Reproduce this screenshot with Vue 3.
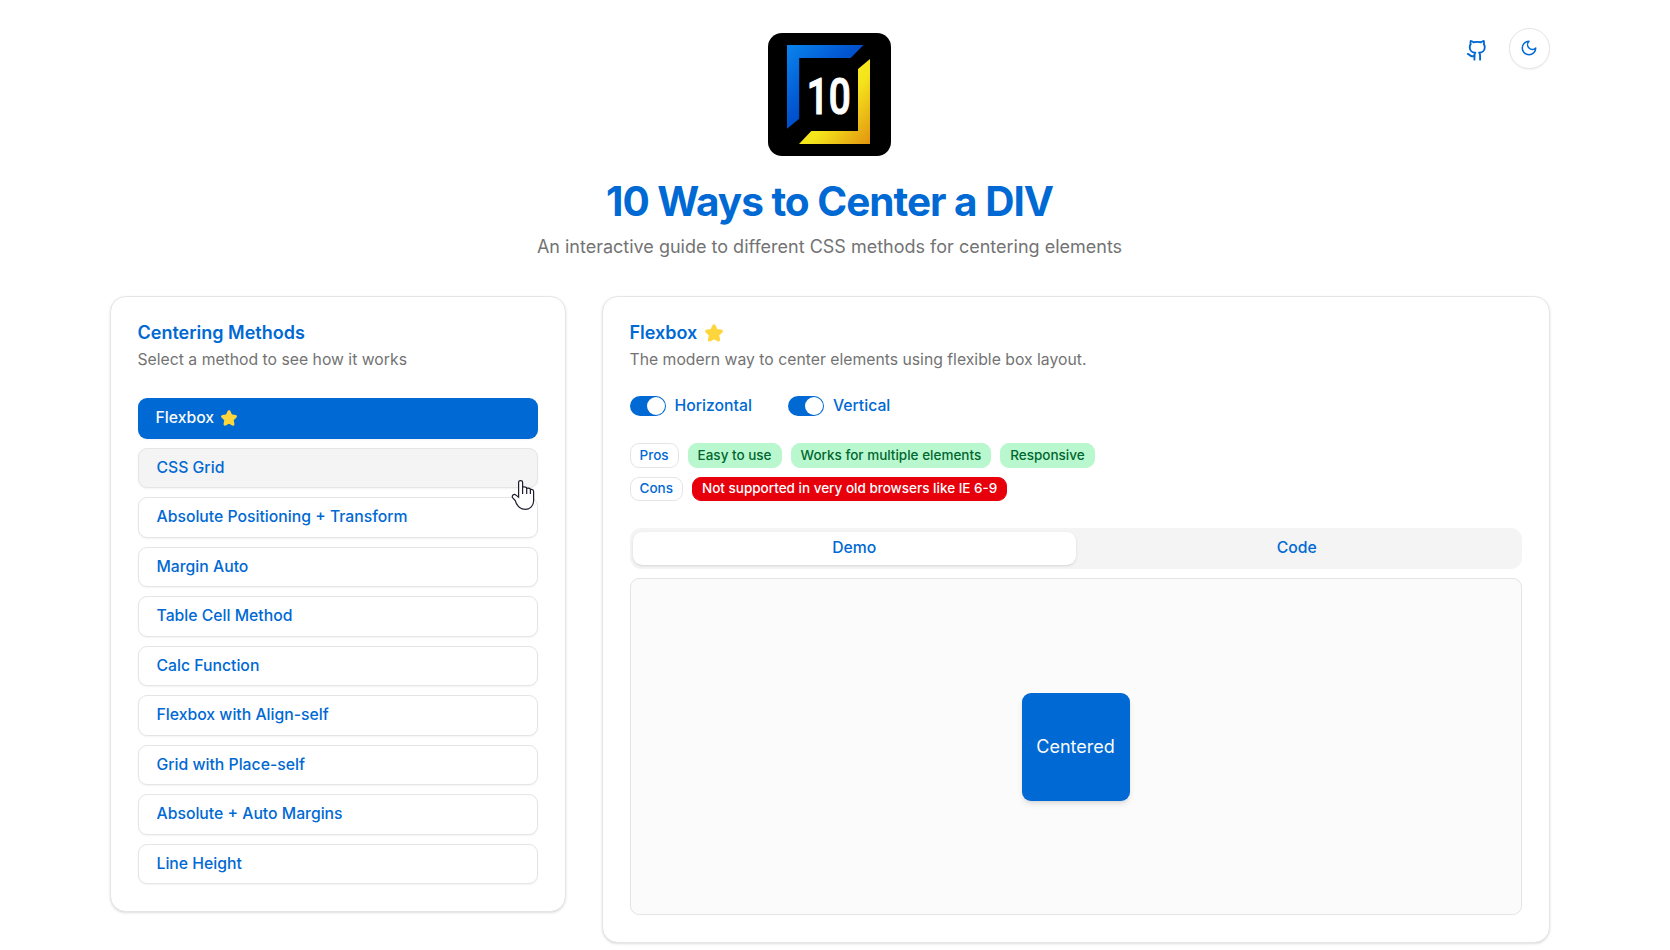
<script setup>
import { ref } from 'vue'

const methods = [
  'Flexbox',
  'CSS Grid',
  'Absolute Positioning + Transform',
  'Margin Auto',
  'Table Cell Method',
  'Calc Function',
  'Flexbox with Align-self',
  'Grid with Place-self',
  'Absolute + Auto Margins',
  'Line Height',
]
const selected = ref(0)
const hovered = ref(1)
const pros = ['Easy to use', 'Works for multiple elements', 'Responsive']
const cons = ['Not supported in very old browsers like IE 6-9']
const toggles = ['Horizontal', 'Vertical']
const starPath = 'M12 3.6L14.6 9.1L20.6 9.9L16.2 14.1L17.3 20.2L12 17.3L6.7 20.2L7.8 14.1L3.4 9.9L9.4 9.1Z'
</script>

<template>
  <div class="page">
    <header class="header">
      <div class="brand">
        <svg class="logo" viewBox="0 0 123 123">
          <defs>
            <linearGradient id="blue" x1="0" y1="0" x2="0.75" y2="0.75">
              <stop offset="0" stop-color="#0a84ee" />
              <stop offset="0.65" stop-color="#0050cc" />
              <stop offset="1" stop-color="#0048c0" />
            </linearGradient>
            <linearGradient id="gold" x1="0.3" y1="0.3" x2="1" y2="1">
              <stop offset="0" stop-color="#fbf31c" />
              <stop offset="0.4" stop-color="#f4e41c" />
              <stop offset="1" stop-color="#e2940f" />
            </linearGradient>
          </defs>
          <rect width="123" height="123" rx="14" fill="#000" />
          <path d="M19 12H95.5L82.7 25H31.2V85.7L19 95.8Z" fill="url(#blue)" />
          <path d="M102 26V111H31L43.3 98H90V36Z" fill="url(#gold)" />
          <text x="38.7" y="81" textLength="44" lengthAdjust="spacingAndGlyphs">10</text>
        </svg>
        <h1>10 Ways to Center a DIV</h1>
        <p>An interactive guide to different CSS methods for centering elements</p>
      </div>
      <div class="actions">
        <svg class="github" viewBox="0 0 24 24">
          <path d="M15 22v-4a4.8 4.8 0 0 0-1-3.5c3 0 6-2 6-5.5.08-1.25-.27-2.48-1-3.5.28-1.15.28-2.35 0-3.5 0 0-1 0-3 1.5-2.64-.5-5.36-.5-8 0C6 2 5 2 5 2c-.3 1.15-.3 2.35 0 3.5A5.403 5.403 0 0 0 4 9c0 3.5 3 5.5 6 5.5-.39.49-.68 1.05-.85 1.65-.17.6-.22 1.23-.15 1.85v4" />
          <path d="M9 18c-4.51 2-5-2-7-2" />
        </svg>
        <button class="theme" aria-label="Theme">
          <svg viewBox="0 0 24 24"><path d="M12 3a6 6 0 0 0 9 9 9 9 0 1 1-9-9Z" /></svg>
        </button>
      </div>
    </header>

    <main class="columns">
      <section class="card">
        <h2>Centering Methods</h2>
        <p class="desc">Select a method to see how it works</p>
        <div class="methods">
          <button
            v-for="(name, i) in methods"
            :key="name"
            class="method"
            :class="{ active: selected === i, hover: hovered === i }"
            @click="selected = i"
          >
            {{ name }}
            <svg v-if="i === 0" class="star" viewBox="0 0 24 24"><path :d="starPath" /></svg>
            <svg v-if="hovered === i" class="pointer" viewBox="0 0 24 32">
              <path d="M7.6 16V3.2Q7.6 1.6 9.6 1.6T11.6 3.2V8Q15.5 7.6 15.7 9.3Q19.2 8.8 19.4 10.4Q22.6 10 22.6 12.4V22Q22.6 25.4 20.3 27.8Q18 30.3 14.5 30.3Q9.8 30.3 7.2 27.2Q5 24.6 4.4 21.8L1.8 18.8Q.6 17.2 2 16T5 16.1L7.6 18.2Z" />
              <path d="M11.6 8V15M15.7 9.3V15M19.4 10.4V15" />
            </svg>
          </button>
        </div>
      </section>

      <section class="card">
        <h2>Flexbox <svg class="star" viewBox="0 0 24 24"><path :d="starPath" /></svg></h2>
        <p class="desc">The modern way to center elements using flexible box layout.</p>
        <div class="toggles">
          <label v-for="t in toggles" :key="t"><span class="switch"></span>{{ t }}</label>
        </div>
        <div class="badges">
          <div class="row">
            <span class="badge">Pros</span>
            <span v-for="p in pros" :key="p" class="badge pro">{{ p }}</span>
          </div>
          <div class="row">
            <span class="badge">Cons</span>
            <span v-for="c in cons" :key="c" class="badge con">{{ c }}</span>
          </div>
        </div>
        <div class="tabs">
          <button class="tab current">Demo</button>
          <button class="tab">Code</button>
        </div>
        <div class="demo"><div class="box">Centered</div></div>
      </section>
    </main>
  </div>
</template>

<style>
body {
  background: #fff;
  overflow: hidden;
}
</style>

<style scoped>
.page {
  box-sizing: border-box;
  width: 1659px;
  height: 950px;
  padding: 28px 109.5px 0;
  font-family: Inter, 'Liberation Sans', sans-serif;
  color: #0069d3;
}
.page * {
  box-sizing: border-box;
}
h1,
h2,
p {
  margin: 0;
}
button {
  font: inherit;
  color: inherit;
}
.header {
  display: grid;
  grid-template-columns: 1fr auto 1fr;
  height: 268px;
}
.brand {
  grid-column: 2;
  display: flex;
  flex-direction: column;
  align-items: center;
  padding-top: 5px;
}
.logo {
  display: block;
  width: 123px;
  height: 123px;
  margin-right: 1px;
}
.logo text {
  font: 500 49.5px Roboto, sans-serif;
  fill: #fff;
  stroke: #fff;
  stroke-width: 1.2;
  stroke-linejoin: round;
}
h1 {
  margin-top: 23px;
  font-size: 40.5px;
  line-height: 45px;
  font-weight: 700;
  letter-spacing: -0.025em;
}
.brand p {
  margin-top: 9px;
  font-size: 18px;
  line-height: 27px;
  color: #737373;
}
.actions {
  display: flex;
  justify-content: flex-end;
  align-items: center;
  gap: 20.5px;
  height: 40.5px;
}
.actions svg {
  display: block;
  fill: none;
  stroke: #0069d3;
  stroke-width: 2;
  stroke-linecap: round;
  stroke-linejoin: round;
}
.github {
  width: 22.5px;
  height: 22.5px;
  margin-top: 3px;
}
.theme {
  display: flex;
  align-items: center;
  justify-content: center;
  width: 40.5px;
  height: 40.5px;
  padding: 0;
  border: 1px solid #e5e5e5;
  border-radius: 50%;
  background: #fff;
  box-shadow: 0 1px 2px rgba(0, 0, 0, 0.05);
}
.theme svg {
  width: 18px;
  height: 18px;
}
.columns {
  display: grid;
  grid-template-columns: 456px 948px;
  gap: 36px;
  align-items: start;
}
.card {
  padding: 27px;
  border: 1px solid #e5e5e5;
  border-radius: 15.75px;
  background: #fff;
  box-shadow: 0 1px 3px rgba(0, 0, 0, 0.1), 0 1px 2px -1px rgba(0, 0, 0, 0.1);
}
h2 {
  display: flex;
  align-items: center;
  gap: 7px;
  height: 18px;
  font-size: 18px;
  line-height: 18px;
  font-weight: 600;
}
.desc {
  margin-top: 6.75px;
  font-size: 15.75px;
  line-height: 22.5px;
  color: #737373;
}
.star {
  width: 20px;
  height: 20px;
  fill: #fdd63d;
  stroke: #fdd63d;
  stroke-width: 4;
  stroke-linejoin: round;
}
.methods {
  display: flex;
  flex-direction: column;
  gap: 9px;
  margin-top: 27px;
}
.method {
  position: relative;
  display: flex;
  align-items: center;
  gap: 6px;
  height: 40.5px;
  padding: 0 18px 1.5px;
  border: 1px solid #e5e5e5;
  border-radius: 9px;
  background: #fff;
  box-shadow: 0 1px 2px rgba(0, 0, 0, 0.05);
  font-size: 15.75px;
  font-weight: 500;
}
.method.active {
  border: 0;
  background: #0069d3;
  color: #fafafa;
}
.method.hover {
  background: #f4f4f4;
}
.method .star {
  width: 18px;
  height: 18px;
}
.pointer {
  position: absolute;
  z-index: 1;
  left: 372px;
  top: 30px;
  width: 24px;
  height: 32px;
  fill: #fff;
  stroke: #1c1c2c;
  stroke-width: 1.2;
}
.toggles {
  display: flex;
  gap: 36px;
  margin-top: 25px;
  height: 20px;
}
.toggles label {
  display: flex;
  align-items: center;
  gap: 9px;
  font-size: 15.75px;
  line-height: 20px;
  font-weight: 500;
}
.switch {
  display: flex;
  justify-content: flex-end;
  width: 36px;
  height: 20px;
  padding: 1px;
  border-radius: 10px;
  background: #0069d3;
}
.switch::after {
  content: '';
  width: 18px;
  height: 18px;
  border-radius: 50%;
  background: #fff;
}
.badges {
  display: flex;
  flex-direction: column;
  gap: 9px;
  margin-top: 27px;
}
.row {
  display: flex;
  gap: 9px;
}
.badge {
  height: 24.5px;
  padding: 1.5px 9px;
  border: 1px solid #e5e5e5;
  border-radius: 9px;
  font-size: 13.5px;
  line-height: 18px;
  font-weight: 500;
}
.badge.pro {
  border-color: #b9f8cf;
  background: #b9f8cf;
  color: #016630;
}
.badge.con {
  border-color: #e7000b;
  background: #e7000b;
  color: #fff;
}
.tabs {
  display: grid;
  grid-template-columns: 1fr 1fr;
  height: 40.5px;
  margin-top: 27px;
  padding: 3.4px;
  border-radius: 11.25px;
  background: #f4f4f4;
}
.tab {
  padding: 0 0 1.5px;
  border: 0;
  border-radius: 9px;
  background: none;
  font-size: 15.75px;
  font-weight: 500;
}
.tab.current {
  background: #fff;
  box-shadow: 0 1px 3px rgba(0, 0, 0, 0.1), 0 1px 2px -1px rgba(0, 0, 0, 0.1);
}
.demo {
  display: flex;
  align-items: center;
  justify-content: center;
  height: 337.5px;
  margin-top: 9px;
  border: 1px solid #e5e5e5;
  border-radius: 9px;
  background: #fbfbfb;
}
.box {
  display: flex;
  align-items: center;
  justify-content: center;
  width: 108px;
  height: 108px;
  border-radius: 9px;
  background: #0069d3;
  box-shadow: 0 4px 6px -1px rgba(0, 0, 0, 0.1), 0 2px 4px -2px rgba(0, 0, 0, 0.1);
  color: #fafafa;
  font-size: 18px;
}
</style>
